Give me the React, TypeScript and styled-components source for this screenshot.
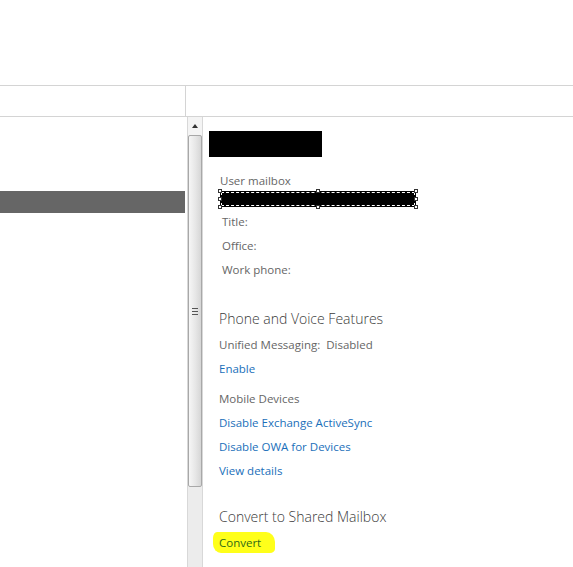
import styled, { createGlobalStyle } from 'styled-components';

const Global = createGlobalStyle`
  html, body {
    margin: 0;
    padding: 0;
    background: #ffffff;
  }
  body {
    font-family: 'Segoe UI', 'Open Sans', 'Noto Sans', sans-serif;
    font-size: 11.5px;
    color: #666666;
    overflow: hidden;
  }
`;

const Page = styled.div`
  width: 573px;
  height: 567px;
  display: flex;
  flex-direction: column;
  overflow: hidden;
`;

const TopSpace = styled.div`
  height: 85px;
  flex: none;
  border-bottom: 1px solid #d4d4d4;
`;

const HeaderRow = styled.div`
  height: 30px;
  flex: none;
  display: flex;
  border-bottom: 1px solid #d4d4d4;
`;

const HeaderCell = styled.div<{ $width?: number }>`
  width: ${(p) => (p.$width ? `${p.$width}px` : 'auto')};
  flex: ${(p) => (p.$width ? 'none' : '1')};
  border-right: ${(p) => (p.$width ? '1px solid #d4d4d4' : 'none')};
`;

const Body = styled.div`
  flex: 1;
  display: flex;
  min-height: 0;
`;

const ListPane = styled.div`
  width: 186px;
  flex: none;
  padding-top: 74px;
`;

const SelectedRow = styled.div`
  height: 22px;
  width: 185px;
  background: #666666;
`;

const Scrollbar = styled.div`
  width: 16px;
  flex: none;
  margin-left: 1px;
  display: flex;
  flex-direction: column;
  background: #ececec;
  border-left: 1px solid #d8d8d8;
  border-right: 1px solid #d8d8d8;
  box-sizing: border-box;
`;

const ArrowButton = styled.div`
  height: 18px;
  flex: none;
  display: flex;
  align-items: center;
  justify-content: center;
  background: #f4f4f4;
`;

const ArrowUp = styled.div`
  width: 0;
  height: 0;
  border-left: 3px solid transparent;
  border-right: 3px solid transparent;
  border-bottom: 4px solid #333333;
`;

const Thumb = styled.div`
  height: 350px;
  flex: none;
  border: 1px solid #a8a8a8;
  border-radius: 2px;
  background: linear-gradient(to right, #f6f6f6 0%, #e6e6e6 55%, #d6d6d6 100%);
  display: flex;
  align-items: center;
  justify-content: center;
`;

const Grip = styled.div`
  width: 6px;
  height: 5px;
  border-top: 1px solid #555555;
  border-bottom: 1px solid #555555;
  position: relative;
  &::after {
    content: '';
    position: absolute;
    left: 0;
    right: 0;
    top: 2px;
    border-top: 1px solid #555555;
  }
`;

const DetailPane = styled.div`
  flex: 1;
  padding: 14px 0 0 6px;
  display: flex;
  flex-direction: column;
`;

const NameRedaction = styled.div`
  width: 113px;
  height: 26px;
  background: #000000;
`;

const Info = styled.div`
  display: flex;
  flex-direction: column;
  padding-left: 11px;
  margin-top: 13px;
`;

const Caption = styled.div`
  line-height: 22px;
  color: #666666;
`;

const SelectedValue = styled.div`
  position: relative;
  width: 196px;
  height: 16px;
  margin-top: -1px;
  background: #000000;
  outline: 1px dashed #ffffff;
  outline-offset: -2px;
`;

const Handle = styled.span<{ $x: string; $y: string }>`
  position: absolute;
  left: ${(p) => p.$x};
  top: ${(p) => p.$y};
  width: 4px;
  height: 4px;
  margin: -2px 0 0 -2px;
  background: #ffffff;
  border: 1px solid #333333;
  box-sizing: border-box;
`;

const Field = styled.div<{ $gap?: number }>`
  line-height: 24px;
  padding-left: 2px;
  margin-top: ${(p) => p.$gap ?? 0}px;
  color: #666666;
`;

const Section = styled.div<{ $gap: number }>`
  display: flex;
  flex-direction: column;
  padding-left: 10px;
  margin-top: ${(p) => p.$gap}px;
`;

const SectionTitle = styled.div`
  font-size: 14px;
  font-weight: 300;
  line-height: 24px;
  color: #3a3a3a;
`;

const Line = styled.div<{ $gap?: number }>`
  line-height: 24px;
  margin-top: ${(p) => p.$gap ?? 0}px;
  color: #666666;
  white-space: pre;
`;

const Link = styled.a`
  display: block;
  line-height: 24px;
  color: #1a6fba;
  text-decoration: none;
  cursor: pointer;
`;

const Highlight = styled.span`
  display: inline-block;
  margin-left: -6px;
  padding: 0 14px 0 6px;
  line-height: 21px;
  margin-top: 3px;
  background: #ffff1a;
  border-radius: 4px 9px 5px 8px / 6px 10px 4px 9px;
  color: #2e6b17;
`;

const handles: [string, string][] = [
  ['0%', '0%'],
  ['50%', '0%'],
  ['100%', '0%'],
  ['0%', '50%'],
  ['100%', '50%'],
  ['0%', '100%'],
  ['50%', '100%'],
  ['100%', '100%'],
];

export default function App() {
  return (
    <Page>
      <Global />
      <TopSpace />
      <HeaderRow>
        <HeaderCell $width={185} />
        <HeaderCell />
      </HeaderRow>
      <Body>
        <ListPane>
          <SelectedRow />
        </ListPane>
        <Scrollbar>
          <ArrowButton>
            <ArrowUp />
          </ArrowButton>
          <Thumb>
            <Grip />
          </Thumb>
        </Scrollbar>
        <DetailPane>
          <NameRedaction />
          <Info>
            <Caption>User mailbox</Caption>
            <SelectedValue>
              {handles.map(([x, y]) => (
                <Handle key={`${x}-${y}`} $x={x} $y={y} />
              ))}
            </SelectedValue>
            <Field $gap={3}>Title:</Field>
            <Field>Office:</Field>
            <Field>Work phone:</Field>
          </Info>
          <Section $gap={25}>
            <SectionTitle>Phone and Voice Features</SectionTitle>
            <Line $gap={2}>Unified Messaging:  Disabled</Line>
            <Link>Enable</Link>
            <Line $gap={6}>Mobile Devices</Line>
            <Link>Disable Exchange ActiveSync</Link>
            <Link>Disable OWA for Devices</Link>
            <Link>View details</Link>
          </Section>
          <Section $gap={22}>
            <SectionTitle>Convert to Shared Mailbox</SectionTitle>
            <div>
              <Highlight>Convert</Highlight>
            </div>
          </Section>
        </DetailPane>
      </Body>
    </Page>
  );
}
